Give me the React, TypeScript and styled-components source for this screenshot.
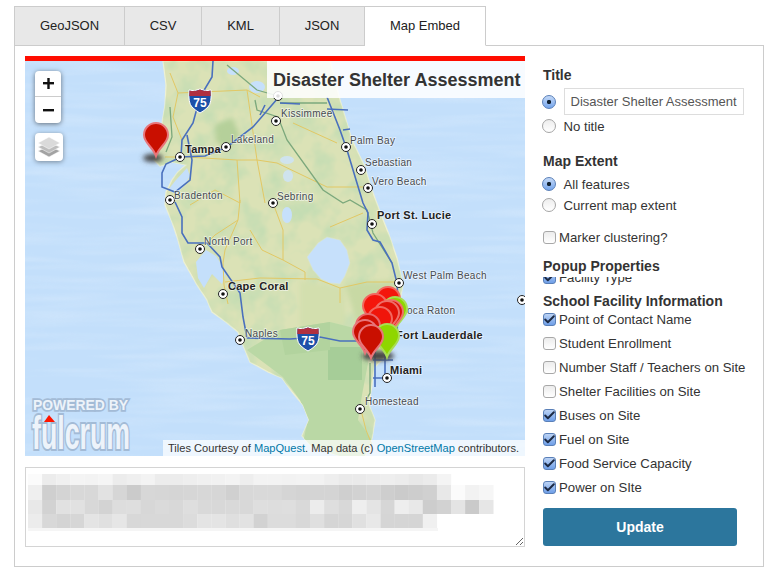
import * as React from 'react'
import styled, { createGlobalStyle } from 'styled-components'
import { Check } from 'lucide-react'

const GlobalStyle = createGlobalStyle`
html, body {
  margin: 0;
  background: #fff;
  font-family: "Liberation Sans", Arial, sans-serif;
  color: #333;
}
`

const Page = styled.div`
width: 777px;
height: 571px;
padding: 6px 14px 0;
box-sizing: border-box;
overflow: hidden;
`
const Tabs = styled.div`
display: flex;
margin-bottom: -1px;
position: relative;
z-index: 1;
`
const Tab = styled.div<{ $active?: boolean; $width: number }>`
width: ${p => p.$width}px;
height: 38px;
line-height: 38px;
text-align: center;
font-size: 13px;
color: #222;
border: 1px solid #ccc;
border-left-width: 0;
background: ${p => (p.$active ? '#fff' : '#e8e8e8')};
border-bottom-color: ${p => (p.$active ? '#fff' : '#ccc')};
&:first-child {
  border-left-width: 1px;
}
`
const Panel = styled.div`
width: 750px;
height: 522px;
box-sizing: border-box;
border: 1px solid #ccc;
padding: 10px 10px 0;
display: flex;
gap: 18px;
`
const LeftCol = styled.div`
width: 500px;
display: flex;
flex-direction: column;
gap: 11px;
`
const MapFrame = styled.div`
width: 500px;
height: 400px;
box-sizing: border-box;
border-top: 5px solid #ff0d00;
position: relative;
overflow: hidden;
background: #c6e0fb;
`
const MapCanvas = styled.svg`
display: block;
width: 500px;
height: 395px;
`
const TitleOverlay = styled.div`
position: absolute;
top: 0;
right: 0;
width: 258px;
height: 37px;
box-sizing: border-box;
padding-left: 6px;
line-height: 38px;
background: rgba(255, 255, 255, 0.86);
font-size: 18px;
font-weight: bold;
color: #333;
white-space: nowrap;
`
const Attribution = styled.div`
position: absolute;
right: 0;
bottom: 0;
width: 362px;
height: 16px;
box-sizing: border-box;
padding-left: 5px;
line-height: 16px;
background: rgba(255, 255, 255, 0.72);
font-size: 11.1px;
color: #333;
white-space: nowrap;
`
const AttrLink = styled.span`
color: #0078a8;
`
const ZoomControl = styled.div`
position: absolute;
left: 10px;
top: 10px;
width: 26px;
border-radius: 4px;
background: #fff;
box-shadow: 0 1px 5px rgba(0, 0, 0, 0.5);
`
const ZoomButton = styled.div<{ $top?: boolean }>`
height: ${p => (p.$top ? 25 : 26)}px;
display: flex;
align-items: center;
justify-content: center;
border-bottom: ${p => (p.$top ? '1px solid #ccc' : 'none')};
`
const LayersButton = styled.div`
position: absolute;
left: 10px;
top: 72px;
width: 28px;
height: 28px;
border-radius: 4px;
background: #fff;
box-shadow: 0 1px 5px rgba(0, 0, 0, 0.4);
display: flex;
align-items: center;
justify-content: center;
`
const EmbedBox = styled.div`
position: relative;
width: 500px;
height: 80px;
`
const EmbedCode = styled.textarea`
display: block;
width: 500px;
height: 80px;
box-sizing: border-box;
border: 1px solid #d4d4d4;
background: #fff;
margin: 0;
padding: 0;
resize: both;
outline: none;
`
const EmbedBlur = styled.svg`
position: absolute;
left: 3px;
top: 7px;
pointer-events: none;
`

const Form = styled.div`
width: 206px;
display: flex;
flex-direction: column;
padding-top: 9px;
`
const Heading = styled.div<{ $mt?: number }>`
font-size: 14px;
font-weight: bold;
line-height: 20px;
color: #333;
margin-top: ${p => p.$mt || 0}px;
`
const Row = styled.label<{ $mt?: number }>`
display: flex;
align-items: center;
height: 20px;
font-size: 13.2px;
color: #333;
white-space: nowrap;
margin-top: ${p => p.$mt || 0}px;
`
const TitleRow = styled(Row)`
height: 27px;
`
const TitleInput = styled.div`
width: 180px;
height: 27px;
box-sizing: border-box;
border: 1px solid #ddd;
padding-left: 6px;
line-height: 25px;
font-size: 13px;
color: #555;
white-space: nowrap;
`
const RadioDot = styled.span<{ $on?: boolean }>`
width: 14px;
height: 14px;
border-radius: 50%;
box-sizing: border-box;
flex: none;
margin-right: 7.5px;
margin-left: -1px;
border: 1px solid ${p => (p.$on ? '#5a80b8' : '#a5a5a5')};
background: ${p => (p.$on ? 'radial-gradient(circle, #123 0 1.8px, transparent 2.5px), linear-gradient(#c4d9f7, #75a5ec)' : 'linear-gradient(#ededed, #fff)')};
`
const CheckBox = styled.span<{ $on?: boolean }>`
width: 13px;
height: 13px;
border-radius: 3px;
box-sizing: border-box;
flex: none;
margin-right: 3px;
border: 1px solid ${p => (p.$on ? '#5a80b8' : '#a8a8a8')};
background: ${p => (p.$on ? 'linear-gradient(#bcd3f5, #6f9fe8)' : 'linear-gradient(#ececec, #fff)')};
display: flex;
align-items: center;
justify-content: center;
`
const Tick = styled(Check)`
color: #1c2a44;
flex: none;
`
const PropertyClip = styled.div`
height: 219px;
margin-top: 1px;
overflow: hidden;
`
const PropertyList = styled.div`
margin-top: -10px;
`
const GroupHeading = styled(Heading)`
line-height: 18px;
margin-top: 5px;
`
const PropertyRow = styled(Row)`
height: 18px;
margin-bottom: 6px;
`
const UpdateButton = styled.button`
width: 194px;
height: 38px;
margin-top: 12px;
border: 0;
border-radius: 3px;
background: #2c769d;
color: #fff;
font-family: inherit;
font-size: 14px;
font-weight: bold;
padding: 0;
`

const tabs = [
  { name: 'GeoJSON', width: 109 },
  { name: 'CSV', width: 76 },
  { name: 'KML', width: 77 },
  { name: 'JSON', width: 84 },
  { name: 'Map Embed', width: 120, active: true },
]

const properties = [
  { name: 'Point of Contact Name', on: true },
  { name: 'Student Enrollment', on: false },
  { name: 'Number Staff / Teachers on Site', on: false },
  { name: 'Shelter Facilities on Site', on: false },
  { name: 'Buses on Site', on: true },
  { name: 'Fuel on Site', on: true },
  { name: 'Food Service Capacity', on: true },
  { name: 'Power on SIte', on: true },
]

const land = 'M163,61 L166,85 L165,105 L161,130 L156,150 L154,160 L160,166 L172,162 L186,165 L178,172 L172,180 L166,192 L165,205 L172,222 L178,240 L184,262 L197,285 L207,300 L212,312 L226,322 L238,332 L243,345 L250,362 L268,372 L282,378 L292,392 L303,405 L309,420 L302,436 L312,447 L340,456 L365,456 L372,438 L375,420 L369,405 L372,385 L374,368 L384,358 L392,350 L395,335 L398,310 L403,285 L397,258 L388,232 L380,212 L372,190 L364,165 L352,140 L340,100 L330,61 Z'
const bay = 'M168,190 L176,180 L187,168 L190,176 L184,186 L176,194 Z'
const harbor = 'M196,262 L206,250 L216,256 L226,272 L222,284 L212,274 L204,288 L198,278 Z'
const okeechobee = 'M307,257 L318,243 L327,237 L340,240 L347,250 L350,263 L345,276 L340,284 L330,283 L321,279 L313,270 Z'

const yellowRoads = [
  'M240,200 L238,220 L225,250 L223,263 L224,285 L228,304',
  'M273,203 L283,230 L283,260 L305,272 L305,280',
  'M225,282 L260,278 L317,279 L340,288 L340,303',
  'M340,288 L367,282 L398,282',
  'M330,227 L363,213',
  'M170,73 L178,93 L173,117 L182,140',
  'M178,93 L247,90 L260,97',
  'M165,157 L187,157 L237,160 L257,160 L277,163 L327,187 L363,187',
  'M237,160 L240,203',
  'M247,90 L257,160 L265,203',
  'M293,123 L337,143',
  'M361,410 L366,430 L372,445',
  'M190,205 L215,190 L240,203 M200,250 L215,235 L238,220',
  'M250,230 L262,250 L283,260',
]
const greenRoads = [
  'M170,107 L172,137 L166,152',
  'M227,65 L257,90 L278,96',
  'M255,100 L257,110 L278,117 L287,140 L323,190 L343,203 L350,200 L367,210 L373,233 L392,263',
  'M280,103 L327,103',
  'M370,363 L370,393 L366,400',
]
const blueRoads = [
  'M213,61 L212,77 L200,97 L193,123 L182,140 L181,157',
  'M187,135 L192,160 L190,180 L175,192 L162,187 L162,173 L166,164 L181,157',
  'M180,157 L205,156 L227,147 L253,127 L278,98',
  'M265,105 L260,115 M280,103 L300,104',
  'M327,97 L340,130 L347,150 L363,203 L368,213 L367,230 L373,240 L380,242 L392,263 L397,283 L398,300 L397,340',
  'M327,109 L348,110 M343,130 L350,129',
  'M175,202 L182,217 L182,233 L188,243 L207,243 L220,257 L222,267 L240,293 L243,317 L247,338',
  'M247,338 L290,339 L320,337 L340,341 L372,341',
  'M373,360 L393,360 M375,345 L375,387 M385,350 L385,375 M373,378 L390,378',
]

const cities: [number, number][] = [
  [180, 157], [226, 147], [276, 121], [346, 147], [361, 170], [368, 188],
  [170, 200], [200, 249], [223, 294], [372, 224], [399, 283], [273, 203],
  [240, 340], [387, 378], [360, 409], [522, 300], [278, 96],
]

const labels: { text: string; x: number; y: number; bold?: boolean }[] = [
  { text: 'Kissimmee', x: 281, y: 117 },
  { text: 'Lakeland', x: 231, y: 143 },
  { text: 'Palm Bay', x: 350, y: 144 },
  { text: 'Sebastian', x: 365, y: 166 },
  { text: 'Vero Beach', x: 372, y: 185 },
  { text: 'Sebring', x: 277, y: 200 },
  { text: 'Tampa', x: 185, y: 153, bold: true },
  { text: 'Bradenton', x: 174, y: 199 },
  { text: 'North Port', x: 204, y: 245 },
  { text: 'Cape Coral', x: 228, y: 290, bold: true },
  { text: 'Port St. Lucie', x: 377, y: 219, bold: true },
  { text: 'West Palm Beach', x: 403, y: 279 },
  { text: 'Boca Raton', x: 400, y: 314 },
  { text: 'Fort Lauderdale', x: 396, y: 339, bold: true },
  { text: 'Miami', x: 390, y: 374, bold: true },
  { text: 'Naples', x: 245, y: 337 },
  { text: 'Homestead', x: 365, y: 405 },
]

const pins: { x: number; y: number; color: string; edge: string }[] = [
  { x: 388, y: 320, color: '#f4160c', edge: '#f2675f' },
  { x: 375, y: 327, color: '#f4160c', edge: '#f2675f' },
  { x: 395, y: 330, color: '#8fd600', edge: '#a9dd55' },
  { x: 391, y: 333, color: '#e01208', edge: '#ee6f68' },
  { x: 387, y: 334, color: '#e01208', edge: '#ee6f68' },
  { x: 380, y: 340, color: '#f0150a', edge: '#f2675f' },
  { x: 368, y: 347, color: '#d31004', edge: '#e8666a' },
  { x: 365, y: 353, color: '#c90f00', edge: '#e8757a' },
  { x: 387, y: 357, color: '#8fd600', edge: '#a9dd55' },
  { x: 371, y: 358, color: '#c90f00', edge: '#e8757a' },
]

const blurRows = [
  ['fb', 'ec', 'f0', 'f4', 'f3', 'f5', 'ec', 'ef', 'f3', 'ec', 'ec', 'ee', 'f0', 'f1', 'f3', 'ee', 'f3', 'f3', 'f2', 'f3', 'f2', 'ee', 'ea', 'ea', 'ec', 'ee', 'ec', 'e8', 'eb', 'f4'],
  ['ef', 'cf', 'd4', 'd8', 'd8', 'e2', 'd6', 'cb', 'd7', 'd6', 'd5', 'd6', 'd7', 'd6', 'd0', 'd8', 'd9', 'd9', 'd5', 'd3', 'd4', 'd4', 'cf', 'd2', 'd4', 'ce', 'cb', 'cd', 'd0', 'e8', 'fb', 'f2', 'f6'],
  ['e8', 'd2', 'e1', 'e1', 'd8', 'd3', 'dd', 'de', 'd7', 'da', 'd8', 'de', 'd9', 'd8', 'd9', 'd8', 'de', 'dd', 'de', 'd9', 'ec', 'de', 'd8', 'ee', 'e4', 'd6', 'ee', 'e8', 'cd', 'd2', 'e4', 'ca', 'e6'],
  ['ec', 'd8', 'd4', 'd6', 'e4', 'e0', 'e6', 'd8', 'd8', 'd8', 'd8', 'dc', 'e4', 'e4', 'df', 'e2', 'd2', 'dc', 'dc', 'd8', 'df', 'd5', 'd6', 'e0', 'e8', 'd5', 'd5', 'd5', 'f0'],
]
const blurHeights = [11, 15, 14, 14]
const BLUR_CELL = 14.1

const Pin = ({ x, y, color, edge }: { x: number; y: number; color: string; edge: string }) => (
  <path
    transform={`translate(${x} ${y})`}
    d="M0,0 C-3,-9 -12,-13 -12,-21 A12,12 0 1 1 12,-21 C12,-13 3,-9 0,0 Z"
    fill={color}
    stroke={edge}
    strokeWidth={2}
  />
)

const Shield = ({ x, y }: { x: number; y: number }) => (
  <g transform={`translate(${x} ${y})`}>
    <path d="M0,1 Q5,3 11,0 Q17,3 22,1 Q23,14 19,18 Q15,22 11,24 Q7,22 3,18 Q-1,14 0,1 Z" fill="#1c50a8" stroke="#fff" strokeWidth={1} />
    <path d="M0.5,1.5 Q5,3 11,0.5 Q17,3 21.5,1.5 L21.7,7 L0.3,7 Z" fill="#b03040" />
    <text x={11} y={18} textAnchor="middle" fontSize={12} fontWeight="bold" fill="#fff" fontFamily="Liberation Sans, sans-serif">75</text>
  </g>
)

const MapArt = () => (
  <MapCanvas viewBox="25 61 500 395">
    <defs>
      <filter id="waves" x="0" y="0" width="100%" height="100%">
        <feTurbulence type="fractalNoise" baseFrequency="0.008 0.11" numOctaves={2} seed={4} />
        <feColorMatrix values="0 0 0 0 0.92  0 0 0 0 0.96  0 0 0 0 1  1.2 0 0 0 -0.5" />
      </filter>
      <filter id="mottle" x="0" y="0" width="100%" height="100%">
        <feTurbulence type="fractalNoise" baseFrequency="0.045" numOctaves={3} seed={9} />
        <feColorMatrix values="0 0 0 0 0.55  0 0 0 0 0.72  0 0 0 0 0.45  2.2 0 0 0 -0.85" />
      </filter>
      <filter id="soft"><feGaussianBlur stdDeviation="0.45" /></filter>
      <filter id="softer"><feGaussianBlur stdDeviation="2.5" /></filter>
      <clipPath id="landClip"><path d={land} /></clipPath>
    </defs>
    <rect x={25} y={61} width={500} height={395} fill="#c3dffb" />
    <rect x={25} y={61} width={500} height={395} filter="url(#waves)" opacity={0.4} />
    <g filter="url(#soft)">
      <path d={land} fill="#dbe2b6" stroke="#eef1d4" strokeWidth={1.2} />
      <g clipPath="url(#landClip)">
        <rect x={150} y={61} width={260} height={395} filter="url(#mottle)" />
        <g filter="url(#softer)">
          <path d="M215,125 L232,118 L240,135 L228,150 L216,142 Z" fill="#b5d09a" />
          <path d="M345,285 L395,280 L390,330 L360,332 Z" fill="#c8d9a4" />
          <path d="M300,280 L345,290 L345,325 L300,330 Z" fill="#d3dfae" />
        </g>
        <path d="M247,350 L280,330 L330,322 L362,330 L368,363 L362,395 L358,420 L372,440 L365,456 L300,456 L308,420 L300,400 L283,377 Z" fill="#bad8a5" />
        <path d="M328,347 L362,347 L362,380 L328,380 Z" fill="#a6cd98" />
        <path d="M280,330 L330,322 L330,350 L285,355 Z" fill="#b2d39e" />
      </g>
      <path d={bay} fill="#c4dffb" />
      <path d={harbor} fill="#c4dffb" />
      <path d={okeechobee} fill="#c6e0fb" stroke="#dde6c8" strokeWidth={0.6} />
      <ellipse cx={287} cy={215} rx={5} ry={8} fill="#c6e0fb" />
      <ellipse cx={257} cy={87} rx={8} ry={6} fill="#c6e0fb" />
      <ellipse cx={233} cy={71} rx={6} ry={4} fill="#c6e0fb" />
      <ellipse cx={287} cy={160} rx={7} ry={4} fill="#cfe3ee" />
      <ellipse cx={288} cy={176} rx={5} ry={6} fill="#cfe3ee" />
      {yellowRoads.map((d, i) => <path key={i} d={d} fill="none" stroke="#e2c864" strokeWidth={1} />)}
      {greenRoads.map((d, i) => <path key={i} d={d} fill="none" stroke="#7ba87c" strokeWidth={1.3} />)}
      {blueRoads.map((d, i) => <path key={i} d={d} fill="none" stroke="#4a70bd" strokeWidth={1.6} />)}
    </g>
    <Shield x={189} y={89} />
    <Shield x={297} y={327} />
    {cities.map(([x, y], i) => (
      <g key={i}>
        <circle cx={x} cy={y} r={4.5} fill="#fff" stroke="#222" strokeWidth={1} />
        <circle cx={x} cy={y} r={1.8} fill="#111" />
      </g>
    ))}
    {labels.map(l => (
      <text
        key={l.text}
        x={l.x}
        y={l.y}
        fontFamily="Liberation Sans, sans-serif"
        fontSize={l.bold ? 11 : 10}
        fontWeight={l.bold ? 'bold' : 'normal'}
        letterSpacing={l.bold ? 0.25 : 0.3}
        fill={l.bold ? '#222' : '#454a50'}
        stroke="#fff"
        strokeOpacity={0.6}
        strokeWidth={1.5}
        paintOrder="stroke"
      >
        {l.text}
      </text>
    ))}
    <g filter="url(#softer)">
      <ellipse cx={153} cy={158} rx={10} ry={4} fill="#444" />
      <ellipse cx={378} cy={356} rx={16} ry={5} fill="#444" />
    </g>
    <Pin x={156} y={156} color="#c90f00" edge="#e8757a" />
    {pins.map((p, i) => <Pin key={i} {...p} />)}
    <g fontFamily="Liberation Sans, sans-serif" fontWeight="bold" fill="#edf3fa" stroke="#a3bbd6" paintOrder="stroke">
      <text x={33} y={410} fontSize={15} strokeWidth={3.5} textLength={95} lengthAdjust="spacingAndGlyphs">POWERED BY</text>
      <text x={32} y={449} fontSize={46} strokeWidth={4} textLength={98} lengthAdjust="spacingAndGlyphs">fulcrum</text>
    </g>
    <path d="M44,422 L49,415 L55,422 Z" fill="#ff1500" />
  </MapCanvas>
)

const LayersIcon = () => (
  <svg width="24" height="24" viewBox="0 0 24 24">
    <path d="M12,11 L23,16 L12,22 L1,16 Z" fill="#a3a3a3" stroke="#fff" strokeWidth={0.5} />
    <path d="M12,7 L23,12 L12,18 L1,12 Z" fill="#bdbdbd" stroke="#fff" strokeWidth={0.5} />
    <path d="M12,2 L23,8 L12,14 L1,8 Z" fill="#dadada" stroke="#fff" strokeWidth={0.5} />
  </svg>
)

const Sign = ({ plus }: { plus?: boolean }) => (
  <svg width="11" height="11" viewBox="0 0 11 11">
    <rect x={0} y={4} width={11} height={2.4} fill="#111" />
    {plus && <rect x={4.3} y={0} width={2.4} height={11} fill="#111" />}
  </svg>
)

const Tickbox = ({ on }: { on?: boolean }) => (
  <CheckBox $on={on}>{on && <Tick size={13} strokeWidth={3.6} />}</CheckBox>
)

export default function App() {
  return (
    <Page>
      <GlobalStyle />
      <Tabs>
        {tabs.map(t => <Tab key={t.name} $active={t.active} $width={t.width}>{t.name}</Tab>)}
      </Tabs>
      <Panel>
        <LeftCol>
          <MapFrame>
            <MapArt />
            <TitleOverlay>Disaster Shelter Assessment</TitleOverlay>
            <ZoomControl>
              <ZoomButton $top><Sign plus /></ZoomButton>
              <ZoomButton><Sign /></ZoomButton>
            </ZoomControl>
            <LayersButton><LayersIcon /></LayersButton>
            <Attribution>
              Tiles Courtesy of <AttrLink>MapQuest</AttrLink>. Map data (c) <AttrLink>OpenStreetMap</AttrLink> contributors.
            </Attribution>
          </MapFrame>
          <EmbedBox>
            <EmbedCode readOnly />
            <EmbedBlur width="480" height="58">
              {blurRows.map((row, r) => {
                const top = blurHeights.slice(0, r).reduce((a, b) => a + b, 0)
                return row.map((c, i) => (
                  <rect key={`${r}-${i}`} x={i * BLUR_CELL} y={top} width={BLUR_CELL + 0.2} height={blurHeights[r]} fill={`#${c}${c}${c}`} />
                ))
              })}
              <rect x={0} y={54} width={410} height={3} fill="#f5f5f5" />
            </EmbedBlur>
          </EmbedBox>
        </LeftCol>
        <Form>
          <Heading>Title</Heading>
          <TitleRow $mt={3}>
            <RadioDot $on />
            <TitleInput>Disaster Shelter Assessment</TitleInput>
          </TitleRow>
          <Row $mt={1}><RadioDot />No title</Row>
          <Heading $mt={15}>Map Extent</Heading>
          <Row $mt={3}><RadioDot $on />All features</Row>
          <Row $mt={1}><RadioDot />Current map extent</Row>
          <Row $mt={12}><Tickbox />Marker clustering?</Row>
          <Heading $mt={9}>Popup Properties</Heading>
          <PropertyClip>
            <PropertyList>
              <Row><Tickbox on />Facility Type</Row>
              <GroupHeading>School Facility Information</GroupHeading>
              {properties.map(p => (
                <PropertyRow key={p.name}><Tickbox on={p.on} />{p.name}</PropertyRow>
              ))}
            </PropertyList>
          </PropertyClip>
          <UpdateButton>Update</UpdateButton>
        </Form>
      </Panel>
    </Page>
  )
}
